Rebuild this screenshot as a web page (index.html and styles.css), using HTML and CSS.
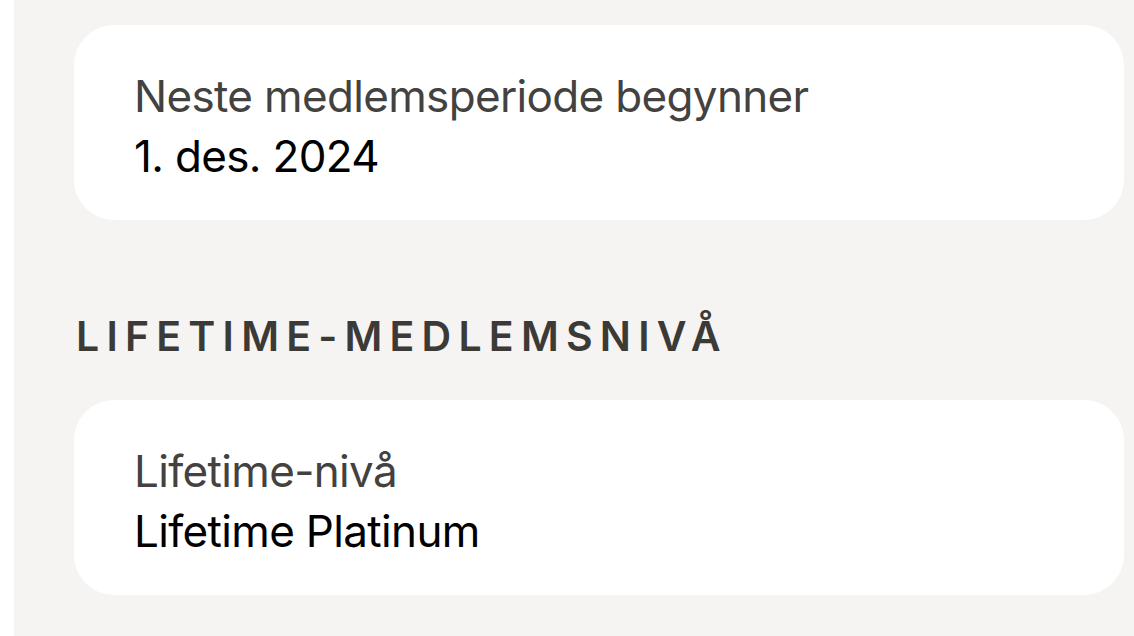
FILE: index.html
```html
<!DOCTYPE html>
<html lang="no">
<head>
<meta charset="utf-8">
<link rel="stylesheet" href="styles.css">
</head>
<body>
<main class="page">
  <section class="card">
    <div class="label">Neste medlemsperiode begynner</div>
    <div class="value">1. des. 2024</div>
  </section>
  <h2 class="heading">LIFETIME-MEDLEMSNIVÅ</h2>
  <section class="card">
    <div class="label">Lifetime-nivå</div>
    <div class="value">Lifetime Platinum</div>
  </section>
</main>
</body>
</html>
```
FILE: styles.css
```css
html, body {
  margin: 0;
  padding: 0;
  background: #ffffff;
}
body {
  font-family: Inter, "Noto Sans", sans-serif;
  height: 636px;
  overflow: hidden;
}
.page {
  margin-left: 14px;
  height: 636px;
  background: #f5f4f2;
  padding: 25px 10px 0 60px;
  box-sizing: border-box;
  display: flex;
  flex-direction: column;
}
.card {
  background: #ffffff;
  border-radius: 40px;
  padding: 41px 60px 34px 60px;
  display: flex;
  flex-direction: column;
  height: 195px;
  box-sizing: border-box;
}
.label {
  font-size: 44px;
  line-height: 60px;
  color: #434240;
  letter-spacing: -0.015em;
}
.value {
  font-size: 44px;
  line-height: 60px;
  color: #000000;
  letter-spacing: -0.015em;
}
.heading {
  margin: 92px 0 40px 2px;
  font-size: 41px;
  line-height: 48px;
  font-weight: 600;
  letter-spacing: 0.176em;
  color: #3b3a37;
}
```
